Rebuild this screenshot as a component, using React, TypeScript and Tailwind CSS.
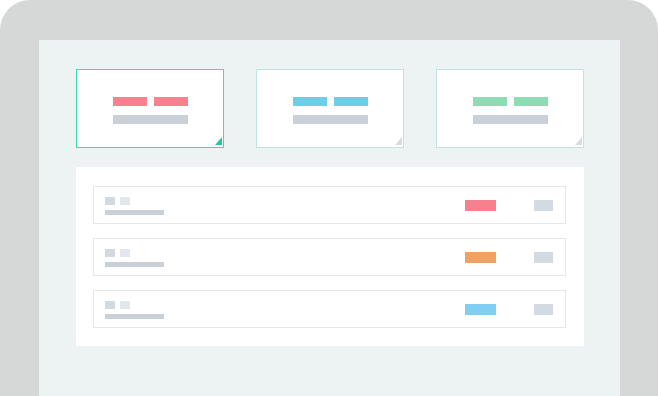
const cards = [
  { bar: 'bg-[#f7818f]', border: 'border-[#3fdcb2]', corner: 'border-b-[#1fc9a0]' },
  { bar: 'bg-[#6fcde4]', border: 'border-[#bfe4e3]', corner: 'border-b-[#d7dbe0]' },
  { bar: 'bg-[#8fdcb4]', border: 'border-[#bfe4e3]', corner: 'border-b-[#d7dbe0]' },
];

const rows = ['bg-[#f7808f]', 'bg-[#f0a265]', 'bg-[#80cff3]'];

function StatCard({ card }: { card: (typeof cards)[number] }) {
  return (
    <div className={`relative flex h-[79px] w-[148px] flex-col items-center border bg-white pt-[27px] ${card.border}`}>
      <div className="flex gap-[7px]">
        <div className={`h-[9px] w-[34px] ${card.bar}`} />
        <div className={`h-[9px] w-[34px] ${card.bar}`} />
      </div>
      <div className="mt-[9px] h-[9px] w-[75px] bg-[#c9d0d7]" />
      <div
        className={`absolute right-[1px] bottom-[2px] h-0 w-0 border-b-[8px] border-l-[7px] border-l-transparent ${card.corner}`}
      />
    </div>
  );
}

function ListRow({ tone }: { tone: string }) {
  return (
    <div className="flex h-[38px] items-center border border-[#e6e8ea] bg-white pl-[11px] pr-[12px]">
      <div className="flex flex-col gap-[5px] pt-[1px]">
        <div className="flex gap-[5px]">
          <div className="h-[8px] w-[10px] bg-[#d3d9e1]" />
          <div className="h-[8px] w-[10px] bg-[#e1e7ef]" />
        </div>
        <div className="h-[5px] w-[59px] bg-[#c9d0d7]" />
      </div>
      <div className={`ml-auto h-[11px] w-[31px] ${tone}`} />
      <div className="ml-[38px] h-[11px] w-[19px] bg-[#d4dae1]" />
    </div>
  );
}

export default function App() {
  return (
    <div className="h-[396px] w-[658px] overflow-hidden bg-white">
      <div className="h-full rounded-t-[30px] bg-[#d6d8d7] pt-[40px] pl-[39px] pr-[38px]">
        <div className="h-full bg-[#edf3f3] pt-[29px] pl-[37px]">
          <div className="flex w-[508px] flex-col gap-[19px]">
            <div className="flex gap-[32px]">
              {cards.map((card, i) => (
                <StatCard key={i} card={card} />
              ))}
            </div>
            <div className="flex flex-col gap-[14px] bg-white pt-[19px] pb-[18px] pl-[17px] pr-[18px]">
              {rows.map((tone, i) => (
                <ListRow key={i} tone={tone} />
              ))}
            </div>
          </div>
        </div>
      </div>
    </div>
  );
}
